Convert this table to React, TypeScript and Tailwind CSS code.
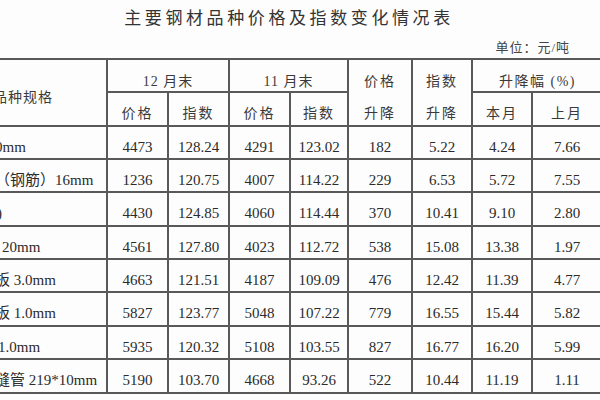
const rows = [
  { name: "0mm", shift: "-ml-[5px]", v: ["4473", "128.24", "4291", "123.02", "182", "5.22", "4.24", "7.66"], h: "h-[33px]" },
  { name: "（钢筋）16mm", shift: "-ml-[5px]", v: ["1236", "120.75", "4007", "114.22", "229", "6.53", "5.72", "7.55"], h: "h-[33px]" },
  { name: ")", shift: "-ml-[3px]", v: ["4430", "124.85", "4060", "114.44", "370", "10.41", "9.10", "2.80"], h: "h-[34px]" },
  { name: "20mm", shift: "ml-[2px]", v: ["4561", "127.80", "4023", "112.72", "538", "15.08", "13.38", "1.97"], h: "h-[33px]" },
  { name: "板 3.0mm", shift: "-ml-[5px]", v: ["4663", "121.51", "4187", "109.09", "476", "12.42", "11.39", "4.77"], h: "h-[33px]" },
  { name: "板 1.0mm", shift: "-ml-[5px]", v: ["5827", "123.77", "5048", "107.22", "779", "16.55", "15.44", "5.82"], h: "h-[34px]" },
  { name: "1.0mm", shift: "-ml-[2px]", v: ["5935", "120.32", "5108", "103.55", "827", "16.77", "16.20", "5.99"], h: "h-[33px]" },
  { name: "缝管 219*10mm", shift: "-ml-[5px]", v: ["5190", "103.70", "4668", "93.26", "522", "10.44", "11.19", "1.11"], h: "h-[34px]" },
];

const cell = "border-2 border-[#595959] p-0 align-top text-center";

export default function App() {
  return (
    <div className="w-[600px] h-[400px] overflow-hidden bg-[#fdfdfd] text-[#2b2b2b] font-['Liberation_Serif','Noto_Sans_CJK_SC',serif]">
      <div className="h-[38px] pt-[8px] pr-[22px] text-center text-[17px] leading-[22px] tracking-[3.6px] text-[#333]">
        主要钢材品种价格及指数变化情况表
      </div>
      <div className="h-[20px] pr-[30px] text-right text-[13px] leading-[20px] tracking-[1px] text-[#444]">
        单位：元/吨
      </div>
      <table className="table-fixed border-collapse w-[602px] text-[15px] leading-[18px]">
        <colgroup>
          <col className="w-[107px]" />
          <col className="w-[61px]" />
          <col className="w-[61px]" />
          <col className="w-[61px]" />
          <col className="w-[58px]" />
          <col className="w-[64px]" />
          <col className="w-[60px]" />
          <col className="w-[60px]" />
          <col className="w-[70px]" />
        </colgroup>
        <thead className="text-[14px] text-[#3a3a3a]">
          <tr className="h-[33px]">
            <td rowSpan={2} className={cell + " border-l-0 text-left pt-[29px] overflow-hidden whitespace-nowrap"}>
              <span className="inline-block -ml-[7px] tracking-[1px]">品种规格</span>
            </td>
            <td colSpan={2} className={cell + " pt-[13px]"}>
              <span className="tracking-[1px]">12 月末</span>
            </td>
            <td colSpan={2} className={cell + " pt-[13px]"}>
              <span className="tracking-[1px]">11 月末</span>
            </td>
            <td rowSpan={2} className={cell + " pt-[13px]"}>
              <div className="flex flex-col gap-[14px] tracking-[2px]">
                <span>价格</span>
                <span>升降</span>
              </div>
            </td>
            <td rowSpan={2} className={cell + " pt-[13px]"}>
              <div className="flex flex-col gap-[14px] tracking-[2px]">
                <span>指数</span>
                <span>升降</span>
              </div>
            </td>
            <td colSpan={2} className={cell + " pt-[13px] border-r-0"}>
              <span className="tracking-[1.5px]">升降幅 (%)</span>
            </td>
          </tr>
          <tr className="h-[34px]">
            {["价格", "指数", "价格", "指数", "本月", "上月"].map((t, i) => (
              <td key={i} className={cell + " pt-[12px]"}>
                <span className="tracking-[2px]">{t}</span>
              </td>
            ))}
          </tr>
        </thead>
        <tbody>
          {rows.map((r, i) => (
            <tr key={i} className={r.h}>
              <td className={cell + " border-l-0 text-left pt-[11px] overflow-hidden whitespace-nowrap"}>
                <span className={"inline-block " + r.shift}>{r.name}</span>
              </td>
              {r.v.map((x, j) => (
                <td key={j} className={cell + " pt-[11px]"}>
                  {x}
                </td>
              ))}
            </tr>
          ))}
        </tbody>
      </table>
    </div>
  );
}
